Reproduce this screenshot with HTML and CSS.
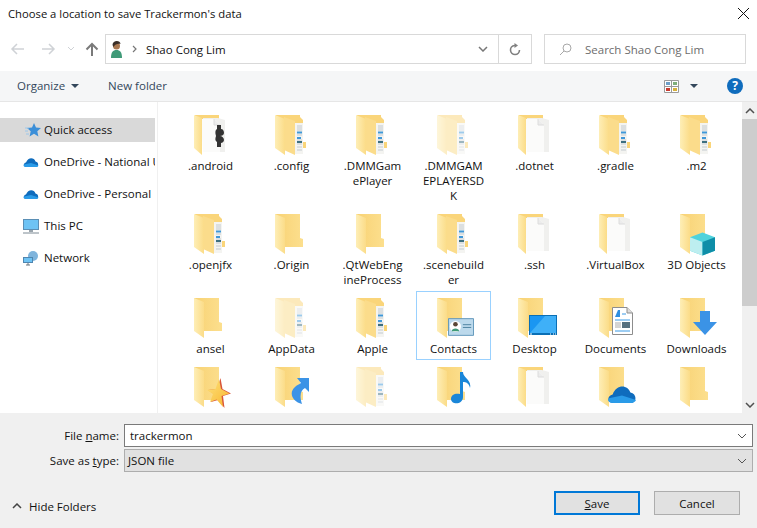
FILE: index.html
```html
<!DOCTYPE html>
<html>
<head>
  <meta charset="UTF-8">
  <title>Choose a location to save Trackermon's data</title>
  <link rel="stylesheet" href="styles.css">
</head>
<body>
  <svg class="defs" width="0" height="0">
    <defs>
      <linearGradient id="backFill" x1="0" y1="0" x2="1" y2="0">
        <stop offset="0" stop-color="#f8d274"/>
        <stop offset="1" stop-color="#fcdf8e"/>
      </linearGradient>
      <linearGradient id="doorFill" x1="0" y1="0" x2="1" y2="0">
        <stop offset="0" stop-color="#feeeb6"/>
        <stop offset="1" stop-color="#fbdc88"/>
      </linearGradient>
      <linearGradient id="starFill" x1="0" y1="0" x2="1" y2="1">
        <stop offset="0" stop-color="#fde27c"/>
        <stop offset="1" stop-color="#f9b52e"/>
      </linearGradient>
      <!-- plain folder, everything else is drawn on top of it -->
      <symbol id="folder" viewBox="0 0 32 40">
        <path d="M0 0H25V24L28 25V33H3z" fill="url(#backFill)"/>
        <path d="M0 0L10 4V40L0 33z" fill="url(#doorFill)"/>
      </symbol>
      <symbol id="data" viewBox="0 0 32 40">
        <path d="M1 0H25V2L28 5V27H31V33H3z" fill="#fad57a"/>
        <path d="M9 2L20 6V40L9 35z" fill="#fbdc8b"/>
        <path d="M0 0L10 4V40L0 33z" fill="url(#doorFill)"/>
        <path d="M20 8H28V39H20z" fill="#f4f4f1"/>
        <path d="M22 11H27M22 13H27M22 15H27M22 20H27M22 25H27M22 29H27M22 32H27M22 35H27" stroke="#c3cacf"/>
        <path d="M22 17.500H27M22 23H26" stroke="#3f97d8" stroke-width="2"/>
        <path d="M22 27H27" stroke="#3d6f80" stroke-width="2"/>
      </symbol>
      <symbol id="paper" viewBox="0 0 32 40">
        <path d="M1 0H25V4H1z" fill="#fad57a"/>
        <path d="M9 3H24L31 5V37L9 37z" fill="#f0f0ee"/>
        <path d="M7 4H20L26 10V37H9z" fill="#fbfbfa"/>
        <path d="M20 4V10H26" fill="#ececec" stroke="#dcdcdc"/>
        <path d="M0 0L8 3V40L0 33z" fill="url(#doorFill)"/>
      </symbol>
      <symbol id="person" viewBox="0 0 13 18">
        <path d="M1 18C1 12 3 10 6.500 10C10 10 12 12 12 18z" fill="#3f9a78"/>
        <circle cx="6.500" cy="6" r="3.500" fill="#a87750"/>
        <path d="M2.500 5C2.500 0 10.500 0 10.500 4C8 3.500 5 4 3.500 7z" fill="#3a2f28"/>
      </symbol>
      <symbol id="cloud" viewBox="0 0 16 10">
        <path d="M3 10C0 10 0 6 3 5.500C5 0 11 0 12.500 4.500C16 5 16 10 13 10z" fill="#0f6cbd"/>
        <path d="M3 10C1 10 0 8.500 1 7.500L8 6L15.500 8.500C15 9.500 14 10 13 10z" fill="#2a9be8"/>
      </symbol>
    </defs>
  </svg>

  <div class="dialog">
    <div class="titlebar">
      <span>Choose a location to save Trackermon's data</span>
      <svg class="close" width="13" height="13" viewBox="0 0 13 13"><path d="M1 1L12 12M12 1L1 12" stroke="#111" fill="none"/></svg>
    </div>

    <div class="navbar">
      <div class="nav-buttons">
        <svg width="16" height="12" viewBox="0 0 16 12"><path d="M14 6H2M7 1L2 6L7 11" stroke="#cfd2d6" stroke-width="1.500" fill="none"/></svg>
        <svg width="16" height="12" viewBox="0 0 16 12"><path d="M2 6H14M9 1L14 6L9 11" stroke="#cfd2d6" stroke-width="1.500" fill="none"/></svg>
        <svg width="8" height="6" viewBox="0 0 8 6"><path d="M1 1L4 4L7 1" stroke="#cfd2d6" fill="none"/></svg>
        <svg width="14" height="14" viewBox="0 0 14 14"><path d="M7 14V2M1.500 7.500L7 2L12.500 7.500" stroke="#7a7a7a" stroke-width="2" fill="none"/></svg>
      </div>
      <div class="address">
        <svg class="addr-icon" width="13" height="18"><use href="#person"/></svg>
        <svg class="crumb" width="5" height="8" viewBox="0 0 5 8"><path d="M1 1L4 4L1 7" stroke="#777" stroke-width="1.200" fill="none"/></svg>
        <span class="addr-text">Shao Cong Lim</span>
        <svg class="addr-chev" width="10" height="6" viewBox="0 0 10 6"><path d="M1 1L5 5L9 1" stroke="#777" stroke-width="1.500" fill="none"/></svg>
        <div class="refresh">
          <svg width="12" height="13" viewBox="0 0 12 13"><path d="M7 2.500H5.500A4.500 4.500 0 1 0 10.500 7" stroke="#808080" stroke-width="1.600" fill="none"/><path d="M5.500 0L9 2.500L5.500 5z" fill="#808080"/></svg>
        </div>
      </div>
      <div class="search">
        <svg width="13" height="13" viewBox="0 0 13 13"><circle cx="8" cy="5" r="4" stroke="#a8a8a8" fill="none"/><path d="M5 8L1 12" stroke="#a8a8a8" fill="none"/></svg>
        <span>Search Shao Cong Lim</span>
      </div>
    </div>

    <div class="toolbar">
      <span class="tool organize"><span>Organize</span><i class="caret"></i></span>
      <span class="tool"><span>New folder</span></span>
      <div class="toolbar-right">
        <svg width="15" height="13" viewBox="0 0 15 13">
          <path d="M0.500 0.500H14.500V12.500H0.500zM7.500 0.500V12.500M0.500 6.500H14.500" stroke="#9a9a9a" fill="#fff"/>
          <path d="M2 2h4v3H2z" fill="#6d9fc9"/><path d="M9 2h4v3H9z" fill="#7fae7a"/>
          <path d="M2 8h4v3H2z" fill="#c8392f"/><path d="M9 8h4v3H9z" fill="#d6b03c"/>
        </svg>
        <i class="caret view-caret"></i>
        <span class="help">?</span>
      </div>
    </div>

    <div class="content">
      <nav class="sidebar">
        <div class="side-item selected">
          <svg width="16" height="14" viewBox="0 0 16 14"><path d="M9 0L11 4.500L16 5L12.300 8.300L13.400 13.500L9 10.800L4.600 13.500L5.700 8.300L2 5L7 4.500z" fill="#3c8fd8"/><path d="M0 5H4M0 8H3M1 11H4" stroke="#9cc7ea"/></svg>
          <span>Quick access</span>
        </div>
        <div class="side-item"><svg width="16" height="10"><use href="#cloud"/></svg><span>OneDrive - National U</span></div>
        <div class="side-item"><svg width="16" height="10"><use href="#cloud"/></svg><span>OneDrive - Personal</span></div>
        <div class="side-item">
          <svg width="16" height="15" viewBox="0 0 16 15"><path d="M0 0H16V11H0z" fill="#5b8fb5"/><path d="M1 1H15V10H1z" fill="#6ec3f4"/><path d="M6 11H10V13H6z" fill="#9aa5ad"/><path d="M0 14H16" stroke="#7d8a94"/></svg>
          <span>This PC</span>
        </div>
        <div class="side-item">
          <svg width="16" height="15" viewBox="0 0 16 15"><circle cx="10" cy="5" r="5" fill="#7fb4dc"/><path d="M0 6H10V12H0z" fill="#4f86b0"/><path d="M1 7H9V11H1z" fill="#6ec3f4"/><path d="M3 14H7M5 12V14" stroke="#66727c"/></svg>
          <span>Network</span>
        </div>
      </nav>

      <main class="files">
        <div class="file-grid">
          <div class="file">
            <svg class="ficon" width="32" height="40"><use href="#paper"/></svg>
            <svg class="over android" width="9" height="22" viewBox="0 0 9 22"><path d="M2 0H6V4C8 4 9 6 9 8C9 10 7 11 5 11C7 11 9 13 9 15C9 17 7 18 6 18V22H2V17C0 16 0 14 1 11C0 8 0 5 2 4z" fill="#333"/></svg>
            <span>.android</span>
          </div>
          <div class="file"><svg class="ficon" width="32" height="40"><use href="#data"/></svg><span>.config</span></div>
          <div class="file"><svg class="ficon" width="32" height="40"><use href="#data"/></svg><span>.DMMGam<br>ePlayer</span></div>
          <div class="file"><svg class="ficon hidden" width="32" height="40"><use href="#data"/></svg><span>.DMMGAM<br>EPLAYERSD<br>K</span></div>
          <div class="file"><svg class="ficon" width="32" height="40"><use href="#paper"/></svg><span>.dotnet</span></div>
          <div class="file"><svg class="ficon" width="32" height="40"><use href="#data"/></svg><span>.gradle</span></div>
          <div class="file"><svg class="ficon" width="32" height="40"><use href="#data"/></svg><span>.m2</span></div>

          <div class="file"><svg class="ficon" width="32" height="40"><use href="#data"/></svg><span>.openjfx</span></div>
          <div class="file"><svg class="ficon" width="32" height="40"><use href="#folder"/></svg><span>.Origin</span></div>
          <div class="file"><svg class="ficon" width="32" height="40"><use href="#folder"/></svg><span>.QtWebEng<br>ineProcess</span></div>
          <div class="file"><svg class="ficon" width="32" height="40"><use href="#data"/></svg><span>.scenebuild<br>er</span></div>
          <div class="file"><svg class="ficon" width="32" height="40"><use href="#paper"/></svg><span>.ssh</span></div>
          <div class="file"><svg class="ficon" width="32" height="40"><use href="#paper"/></svg><span>.VirtualBox</span></div>
          <div class="file">
            <svg class="ficon" width="32" height="40"><use href="#folder"/></svg>
            <svg class="over cube" width="25" height="24" viewBox="0 0 26 24"><path d="M13 0L26 5V19L13 24L0 19V5z" fill="#4fd2dc"/><path d="M0 5L13 10V24L0 19z" fill="#bdeef0"/><path d="M13 10L26 5V19L13 24z" fill="#0e8ea8"/></svg>
            <span>3D Objects</span>
          </div>

          <div class="file"><svg class="ficon" width="32" height="40"><use href="#folder"/></svg><span>ansel</span></div>
          <div class="file"><svg class="ficon hidden" width="32" height="40"><use href="#data"/></svg><span>AppData</span></div>
          <div class="file"><svg class="ficon" width="32" height="40"><use href="#data"/></svg><span>Apple</span></div>
          <div class="file current">
            <svg class="ficon" width="32" height="40"><use href="#folder"/></svg>
            <svg class="over card" width="26" height="18" viewBox="0 0 28 19"><path d="M0.500 0.500H27.500V18.500H0.500z" fill="#bcd9ec" stroke="#5b93b8"/><circle cx="8" cy="9" r="6" fill="#fff"/><circle cx="8" cy="6.500" r="2.500" fill="#5a4636"/><path d="M4 14C4 10 12 10 12 14z" fill="#3f9a78"/><path d="M16 7H25M16 10H25" stroke="#4a7f9e"/></svg>
            <span>Contacts</span>
          </div>
          <div class="file">
            <svg class="ficon" width="32" height="40"><use href="#folder"/></svg>
            <svg class="over desktop" width="28" height="20" viewBox="0 0 28 20"><path d="M0 0H28V20H0z" fill="#0a6fb5"/><path d="M1 1H27V18H1z" fill="#1a96f2"/><path d="M1 18L16 1H27V18z" fill="#3fb0f8"/><path d="M1 19H3M21 19H22M24 19H25M26 19H27" stroke="#fff"/></svg>
            <span>Desktop</span>
          </div>
          <div class="file">
            <svg class="ficon" width="32" height="40"><use href="#folder"/></svg>
            <svg class="over doc" width="21" height="28" viewBox="0 0 21 28"><path d="M0.500 0.500H15L20.500 6V27.500H0.500z" fill="#fff" stroke="#8d8d8d"/><path d="M15 0.500V6H20.500" fill="#ddd" stroke="#8d8d8d"/><path d="M3 10L6 3H8V10z" fill="#2f8fe0"/><path d="M10 7H14M3 13H18M3 24H18" stroke="#3a9ae5"/><path d="M3 16H9M3 18H9M3 20H9" stroke="#aaa"/><path d="M10 15H18V21H10z" fill="#56707f"/></svg>
            <span>Documents</span>
          </div>
          <div class="file">
            <svg class="ficon" width="32" height="40"><use href="#folder"/></svg>
            <svg class="over down" width="24" height="24" viewBox="0 0 24 24"><path d="M7 0H17V11H24L12 24L0 11H7z" fill="#3b93e6"/></svg>
            <span>Downloads</span>
          </div>

          <div class="file">
            <svg class="ficon" width="32" height="40"><use href="#folder"/></svg>
            <svg class="over star" width="24" height="30" viewBox="0 0 24 30">
              <path d="M13.500 0L15.500 11L24 15.500L16 18L17.500 30L11 22L4 24L7 16L1 12L10 11z" fill="#d8553a"/>
              <path d="M12 1L14 11L22.500 15.500L14.500 18L16 29L9.500 21.500L3 24L6 16L0 12L8.500 11z" fill="url(#starFill)"/>
            </svg>
          </div>
          <div class="file">
            <svg class="ficon" width="32" height="40"><use href="#folder"/></svg>
            <svg class="over shortcut" width="19" height="26" viewBox="0 0 19 26"><path d="M7 0H19V14L15 10C11 12 9 17 12 26C3 24 -2 15 5 9C7 7 8 7 11 5z" fill="#3b93e6"/></svg>
          </div>
          <div class="file"><svg class="ficon hidden" width="32" height="40"><use href="#data"/></svg></div>
          <div class="file">
            <svg class="ficon" width="32" height="40"><use href="#folder"/></svg>
            <svg class="over note" width="21" height="32" viewBox="0 0 21 32"><path d="M9 0H12C12 6 21 8 19 16C18 11 15 10 12 10V25C12 33 0 33 0 27C0 22 5 21 9 22z" fill="#1a86d8"/></svg>
          </div>
          <div class="file"><svg class="ficon" width="32" height="40"><use href="#paper"/></svg></div>
          <div class="file">
            <svg class="ficon" width="32" height="40"><use href="#folder"/></svg>
            <svg class="over onedrive" width="30" height="19" viewBox="0 0 16 10"><use href="#cloud"/></svg>
          </div>
          <div class="file"><svg class="ficon" width="32" height="40"><use href="#folder"/></svg></div>
        </div>
      </main>

      <div class="scrollbar">
        <svg class="arrow" width="10" height="6" viewBox="0 0 10 6"><path d="M1 5L5 1L9 5" stroke="#505050" stroke-width="1.500" fill="none"/></svg>
        <div class="thumb"></div>
        <svg class="arrow arrow-down" width="10" height="6" viewBox="0 0 10 6"><path d="M1 1L5 5L9 1" stroke="#505050" stroke-width="1.500" fill="none"/></svg>
      </div>
    </div>

    <div class="bottom">
      <div class="field-row">
        <label>File <u>n</u>ame:</label>
        <div class="field name-field">
          <span>trackermon</span>
          <svg width="10" height="6" viewBox="0 0 10 6"><path d="M1 1L5 5L9 1" stroke="#555" fill="none"/></svg>
        </div>
      </div>
      <div class="field-row">
        <label>Save as <u>t</u>ype:</label>
        <div class="field type-field">
          <span>JSON file</span>
          <svg width="10" height="6" viewBox="0 0 10 6"><path d="M1 1L5 5L9 1" stroke="#555" fill="none"/></svg>
        </div>
      </div>
      <div class="actions">
        <div class="hide-folders">
          <svg width="10" height="6" viewBox="0 0 10 6"><path d="M1 5L5 1L9 5" stroke="#444" stroke-width="1.500" fill="none"/></svg>
          <span>Hide Folders</span>
        </div>
        <button class="btn primary"><u>S</u>ave</button>
        <button class="btn">Cancel</button>
      </div>
    </div>
  </div>
</body>
</html>
```

FILE: styles.css
```css
* {
  box-sizing: border-box;
}
html, body {
  margin: 0;
  height: 100%;
}
body {
  font-family: "Open Sans", "Noto Sans", sans-serif;
  font-size: 11.5px;
  color: #111;
  background: #fff;
  overflow: hidden;
}
.defs {
  position: absolute;
}
svg {
  display: block;
  flex: none;
}
.dialog {
  display: flex;
  flex-direction: column;
  width: 757px;
  height: 528px;
}

/* title */
.titlebar {
  display: flex;
  align-items: center;
  justify-content: space-between;
  height: 28px;
  padding: 0 7px 2px 8px;
  font-size: 11.26px;
}

/* back/forward + address + search */
.navbar {
  display: flex;
  align-items: center;
  height: 43px;
  padding: 6px 0 7px;
  flex: none;
}
.nav-buttons {
  display: flex;
  align-items: center;
  width: 105px;
  padding-left: 10px;
}
.nav-buttons svg:nth-child(2) {
  margin-left: 14px;
}
.nav-buttons svg:nth-child(3) {
  margin-left: 11px;
}
.nav-buttons svg:nth-child(4) {
  margin-left: 10px;
}
.address {
  display: flex;
  align-items: center;
  width: 427px;
  height: 30px;
  border: 1px solid #d9d9d9;
  padding-left: 4px;
}
.addr-icon {
  margin-right: 9px;
}
.crumb {
  margin-right: 9px;
}
.addr-text {
  flex: 1;
}
.addr-chev {
  margin-right: 10px;
}
.refresh {
  display: flex;
  align-items: center;
  justify-content: center;
  width: 33px;
  height: 100%;
  border-left: 1px solid #d9d9d9;
}
.search {
  display: flex;
  align-items: center;
  gap: 13px;
  width: 202px;
  height: 30px;
  margin-left: 12px;
  padding-left: 14px;
  border: 1px solid #d9d9d9;
  color: #6d6d6d;
}

/* organize bar */
.toolbar {
  display: flex;
  align-items: center;
  height: 31px;
  flex: none;
  padding-left: 17px;
  background: #f5f6f7;
  border-bottom: 1px solid #e6e6e6;
  color: #33475b;
}
.tool {
  display: flex;
  align-items: center;
}
.tool span {
  padding-bottom: 2px;
}
.organize {
  margin-right: 29px;
}
.caret {
  display: block;
  width: 0;
  height: 0;
  margin-left: 6px;
  border: 4px solid transparent;
  border-top: 4px solid #33475b;
  border-bottom: 0;
}
.toolbar-right {
  display: flex;
  align-items: center;
  margin-left: auto;
  padding-right: 14px;
}
.view-caret {
  margin-left: 11px;
}
.help {
  display: block;
  width: 16px;
  height: 16px;
  margin-left: 29px;
  border-radius: 50%;
  background: #0f6cbd;
  color: #fff;
  font-weight: bold;
  font-size: 12px;
  line-height: 16px;
  text-align: center;
}

/* sidebar + files */
.content {
  display: flex;
  flex: 1;
  min-height: 0;
}
.sidebar {
  width: 158px;
  flex: none;
  padding: 16px 2px 0 0;
  border-right: 1px solid #f0f0f0;
  overflow: hidden;
}
.side-item {
  display: flex;
  align-items: center;
  gap: 5px;
  height: 24px;
  margin-bottom: 8px;
  padding-left: 23px;
  white-space: nowrap;
  overflow: hidden;
}
.side-item span {
  padding-bottom: 2px;
}
.side-item.selected {
  background: #d9d9d9;
  padding-left: 25px;
  gap: 3px;
}
.files {
  flex: 1;
  overflow: hidden;
  padding: 6px 0 0 15px;
}
.file-grid {
  display: grid;
  grid-template-columns: repeat(7, 75px);
  column-gap: 6px;
}
.file {
  position: relative;
  padding-top: 6px;
  padding-bottom: 3px;
  text-align: center;
  line-height: 15px;
  border: 1px solid transparent;
}
.file span {
  display: block;
  margin: 3px -4px 0;
  white-space: nowrap;
}
.ficon {
  margin: 0 0 0 20px;
  height: 40px;
}
.ficon.hidden {
  opacity: 0.5;
}
.file.current {
  border-color: #99d1ff;
}

/* overlays on top of the folder icons */
.over {
  position: absolute;
}
.android { left: 41px; top: 16px; }
.cube { left: 30px; top: 24px; }
.card { left: 31px; top: 26px; }
.desktop { left: 31px; top: 23px; }
.doc { left: 33px; top: 15px; }
.down { left: 33px; top: 19px; }
.star { left: 33px; top: 17px; }
.shortcut { left: 35px; top: 17px; }
.note { left: 34px; top: 11px; }
.onedrive { left: 28px; top: 23px; }

.scrollbar {
  display: flex;
  flex-direction: column;
  align-items: center;
  width: 15px;
  flex: none;
  background: #f0f0f0;
}
.arrow {
  margin: 6px 0 5px;
}
.thumb {
  width: 100%;
  height: 187px;
  background: #cdcdcd;
}
.arrow-down {
  margin-top: auto;
}

/* file name panel */
.bottom {
  flex: none;
  height: 115px;
  padding: 11px 4px 0 0;
  background: #f0f0f0;
}
.field-row {
  display: flex;
  align-items: center;
  margin-bottom: 2px;
}
.field-row label {
  width: 119px;
  text-align: right;
  margin-right: 5px;
}
.field {
  display: flex;
  align-items: center;
  justify-content: space-between;
  flex: 1;
  height: 23px;
  padding: 0 5px 0 5px;
  border: 1px solid #7a7a7a;
  background: #fff;
}
.type-field {
  background: #e1e1e1;
  border-color: #adadad;
  padding-left: 3px;
}
.actions {
  display: flex;
  align-items: center;
  margin-top: 19px;
  padding-right: 13px;
}
.hide-folders {
  display: flex;
  align-items: center;
  gap: 7px;
  margin-right: auto;
  padding: 6px 0 0 12px;
}
.btn {
  width: 86px;
  height: 24px;
  margin-left: 14px;
  padding: 0;
  border: 1px solid #adadad;
  background: #e1e1e1;
  font: inherit;
  color: #111;
}
.btn.primary {
  border: 2px solid #0078d7;
}
```
